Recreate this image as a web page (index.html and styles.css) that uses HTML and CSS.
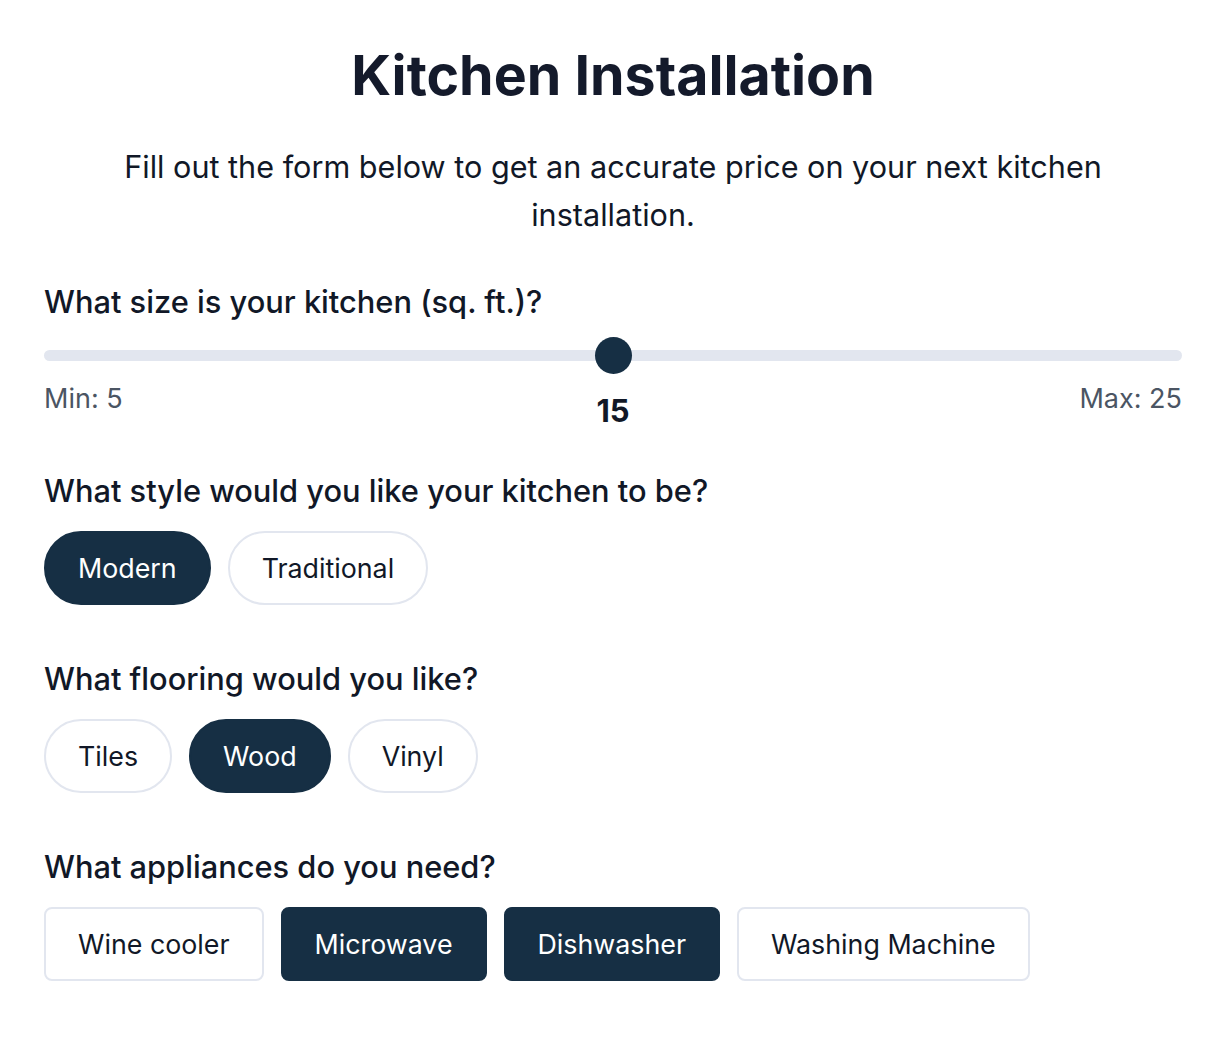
FILE: index.html
```html
<!DOCTYPE html>
<html lang="en">
<head>
  <meta charset="UTF-8">
  <title>Kitchen Installation</title>
  <meta name="viewport" content="width=device-width, initial-scale=1.0">
  <link rel="stylesheet" href="styles.css">
</head>
<body>

  <div class="container">
    <h1 class="title">Kitchen Installation</h1>
    <p class="intro">Fill out the form below to get an accurate price on your next kitchen installation.</p>

    <div class="question first">
      <label for="size" class="question-label">What size is your kitchen (sq. ft.)?</label>
      <input type="range" id="size" class="slider" min="5" max="25" value="15">
      <div class="slider-scale">
        <span>Min: 5</span>
        <span class="slider-value">15</span>
        <span class="slider-max">Max: 25</span>
      </div>
    </div>

    <div class="question">
      <div class="question-label">What style would you like your kitchen to be?</div>
      <div class="options">
        <button class="pill selected">Modern</button>
        <button class="pill">Traditional</button>
      </div>
    </div>

    <div class="question">
      <div class="question-label">What flooring would you like?</div>
      <div class="options">
        <button class="pill">Tiles</button>
        <button class="pill selected">Wood</button>
        <button class="pill">Vinyl</button>
      </div>
    </div>

    <div class="question">
      <div class="question-label">What appliances do you need?</div>
      <div class="options">
        <button class="box">Wine cooler</button>
        <button class="box selected">Microwave</button>
        <button class="box selected">Dishwasher</button>
        <button class="box">Washing Machine</button>
      </div>
    </div>
  </div>

</body>
</html>
```

FILE: styles.css
```css
* {
  margin: 0;
  padding: 0;
  box-sizing: border-box;
}

body {
  font-family: Inter, "Noto Sans", sans-serif;
  color: #111827;
  background: #ffffff;
}

.container {
  padding: 39px 50px 40px 44px;
}

.title {
  font-size: 55.5px;
  line-height: 72px;
  font-weight: 700;
  text-align: center;
  color: #141a2b;
}

.intro {
  margin: 32px auto 0;
  max-width: 1000px;
  font-size: 30.6px;
  line-height: 48px;
  text-align: center;
}

.question {
  margin-top: 54px;
}

.question.first {
  margin-top: 43px;
}

.question-label {
  display: block;
  font-size: 30.8px;
  line-height: 40px;
  font-weight: 500;
}

.slider {
  -webkit-appearance: none;
  appearance: none;
  display: block;
  width: 100%;
  height: 11px;
  margin-top: 28px;
  border-radius: 6px;
  background: #e2e6ef;
  outline: none;
}

.slider::-webkit-slider-thumb {
  -webkit-appearance: none;
  width: 37px;
  height: 37px;
  border-radius: 50%;
  background: #162f44;
  border: none;
}

.slider-scale {
  display: grid;
  grid-template-columns: 1fr auto 1fr;
  align-items: start;
  margin-top: 20px;
  margin-bottom: -12px;
  font-size: 27px;
  line-height: 36px;
  color: #4b5563;
}

.slider-value {
  margin-top: 12px;
  font-size: 31px;
  font-weight: 700;
  color: #111827;
}

.slider-max {
  justify-self: end;
}

.options {
  display: flex;
  gap: 17px;
  margin-top: 20px;
}

.pill,
.box {
  font-family: inherit;
  font-size: 26.8px;
  line-height: 34px;
  color: #111827;
  background: #ffffff;
  border: 2px solid #e2e6ef;
  padding: 18px 32px;
  cursor: pointer;
}

.pill {
  border-radius: 40px;
}

.box {
  border-radius: 8px;
}

.pill.selected,
.box.selected {
  background: #162f44;
  border-color: #162f44;
  color: #ffffff;
}
```
